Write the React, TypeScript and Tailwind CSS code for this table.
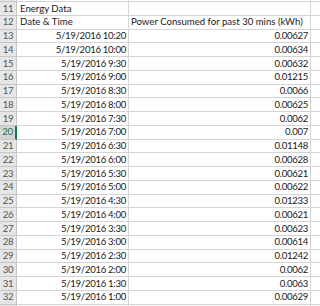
const rows: { n: number; a: string; b: string; alignA?: 'left' | 'right'; alignB?: 'left' | 'right' }[] = [
  { n: 11, a: 'Energy Data', b: '', alignA: 'left' },
  { n: 12, a: 'Date & Time', b: 'Power Consumed for past 30 mins (kWh)', alignA: 'left', alignB: 'left' },
  { n: 13, a: '5/19/2016 10:20', b: '0.00627' },
  { n: 14, a: '5/19/2016 10:00', b: '0.00634' },
  { n: 15, a: '5/19/2016 9:30', b: '0.00632' },
  { n: 16, a: '5/19/2016 9:00', b: '0.01215' },
  { n: 17, a: '5/19/2016 8:30', b: '0.0066' },
  { n: 18, a: '5/19/2016 8:00', b: '0.00625' },
  { n: 19, a: '5/19/2016 7:30', b: '0.0062' },
  { n: 20, a: '5/19/2016 7:00', b: '0.007' },
  { n: 21, a: '5/19/2016 6:30', b: '0.01148' },
  { n: 22, a: '5/19/2016 6:00', b: '0.00628' },
  { n: 23, a: '5/19/2016 5:30', b: '0.00621' },
  { n: 24, a: '5/19/2016 5:00', b: '0.00622' },
  { n: 25, a: '5/19/2016 4:30', b: '0.01233' },
  { n: 26, a: '5/19/2016 4:00', b: '0.00621' },
  { n: 27, a: '5/19/2016 3:30', b: '0.00623' },
  { n: 28, a: '5/19/2016 3:00', b: '0.00614' },
  { n: 29, a: '5/19/2016 2:30', b: '0.01242' },
  { n: 30, a: '5/19/2016 2:00', b: '0.0062' },
  { n: 31, a: '5/19/2016 1:30', b: '0.0063' },
  { n: 32, a: '5/19/2016 1:00', b: '0.00629' },
];

const SELECTED = 20;

export default function App() {
  return (
    <div className="w-[320px] h-[306px] overflow-hidden bg-white text-[9.6px] text-[#1a1a1a] font-['Lato','Open_Sans',sans-serif] leading-none">
      <div className="grid grid-cols-[17px_112px_182px_1fr]">
        {/* sliver of row 10 */}
        <div className="h-[2px] bg-[#e6e6e6] border-b border-r border-[#c6c6c6]" />
        <div className="h-[2px] border-b border-r border-[#d4d4d4]" />
        <div className="h-[2px] border-b border-r border-[#d4d4d4]" />
        <div className="h-[2px] border-b border-[#d4d4d4]" />

        {rows.map((r) => {
          const sel = r.n === SELECTED;
          return (
            <div key={r.n} className="contents">
              <div
                className={
                  sel
                    ? 'h-[13.76px] flex items-center justify-center tracking-[-0.3px] bg-[#d3d3d3] text-[#217346] border-b border-[#c6c6c6] border-r-2 border-r-[#217346]'
                    : 'h-[13.76px] flex items-center justify-center tracking-[-0.3px] bg-[#e6e6e6] text-[#555] border-b border-r border-[#c6c6c6]'
                }
              >
                {r.n}
              </div>
              <div
                className={`h-[13.76px] flex items-center px-[2px] border-b border-r border-[#d4d4d4] whitespace-nowrap ${
                  r.alignA === 'left' ? 'justify-start pl-[3px]' : 'justify-end tracking-[-0.3px]'
                }`}
              >
                {r.a}
              </div>
              <div
                className={`h-[13.76px] flex items-center px-[2px] border-b border-r border-[#d4d4d4] whitespace-nowrap ${
                  r.alignB === 'left' ? 'justify-start' : 'justify-end tracking-[-0.3px]'
                }`}
              >
                {r.b}
              </div>
              <div className="h-[13.76px] border-b border-[#d4d4d4]" />
            </div>
          );
        })}

        <div className="h-[10px] bg-[#e6e6e6] border-r border-[#c6c6c6]" />
        <div className="h-[10px] border-r border-[#d4d4d4]" />
        <div className="h-[10px] border-r border-[#d4d4d4]" />
        <div className="h-[10px]" />
      </div>
    </div>
  );
}
